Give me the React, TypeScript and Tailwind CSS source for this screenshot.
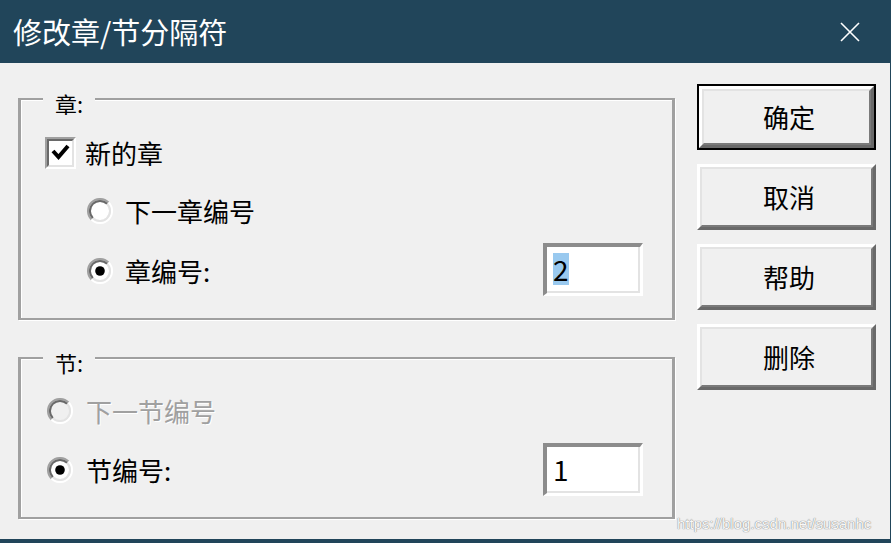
import React from "react";

const cjk = "font-['Noto_Sans_CJK_SC','Noto_Sans',sans-serif]";

function Radio({ checked, disabled }: { checked?: boolean; disabled?: boolean }) {
  return (
    <svg width="26" height="26" viewBox="0 0 26 26" className="shrink-0">
      <circle cx="13" cy="13" r="9" fill={disabled ? "#f0f0f0" : "#fff"} />
      <path d="M4.5 21.5 A12 12 0 0 1 21.5 4.5" stroke="#a0a0a0" strokeWidth="2" fill="none" />
      <path d="M21.5 4.5 A12 12 0 0 1 4.5 21.5" stroke="#fff" strokeWidth="2" fill="none" />
      <path d="M5.9 20.1 A10 10 0 0 1 20.1 5.9" stroke="#696969" strokeWidth="2" fill="none" />
      <path d="M20.1 5.9 A10 10 0 0 1 5.9 20.1" stroke="#e3e3e3" strokeWidth="2" fill="none" />
      {checked && <circle cx="13" cy="13" r="4.8" fill="#000" />}
    </svg>
  );
}

function Checkbox() {
  return (
    <div className="w-[31px] h-[32px] shrink-0 border-t-[2px] border-l-[2px] border-b-[2px] border-r-[2px] border-t-[#a0a0a0] border-l-[#a0a0a0] border-b-white border-r-white">
      <div className="w-full h-full border-2 border-t-[#696969] border-l-[#696969] border-b-[#e3e3e3] border-r-[#e3e3e3] bg-white flex items-center justify-center">
        <svg width="21" height="20" viewBox="0 0 21 20">
          <polyline points="3,8 8.5,14 18,3" stroke="#000" strokeWidth="4" fill="none" />
        </svg>
      </div>
    </div>
  );
}

function NumberBox({ value, selected }: { value: string; selected?: boolean }) {
  return (
    <div className="w-[100px] h-[53px] shrink-0 border-t-[4px] border-l-[4px] border-b-[3px] border-r-[3px] border-t-[#8c8c8c] border-l-[#8c8c8c] border-b-white border-r-white">
      <div className="w-full h-full bg-white border-b-2 border-r-2 border-[#e3e3e3] flex items-center pl-[6px]">
        <span
          className={`text-[28px] leading-[32px] text-black ${cjk} ${selected ? "bg-[#99c9ef]" : ""}`}
        >
          {value}
        </span>
      </div>
    </div>
  );
}

function Group({ label, className, children }: { label: string; className: string; children: React.ReactNode }) {
  return (
    <div
      className={`relative border-t-2 border-b-2 border-l-[3px] border-r-[3px] border-[#a0a0a0] shadow-[inset_1px_1px_0_#fff,1px_1px_0_#fff] ${className}`}
    >
      <span
        className={`absolute left-[22px] -top-[11px] px-[12px] bg-[#f0f0f0] text-[22px] leading-[28px] text-black ${cjk}`}
      >
        {label}
      </span>
      {children}
    </div>
  );
}

function DlgButton({ label, isDefault }: { label: string; isDefault?: boolean }) {
  const body = (
    <div className="h-full border-[3px] border-t-white border-l-white border-b-[#696969] border-r-[#696969]">
      <div className="h-full border-[2px] border-t-[#e3e3e3] border-l-[#e3e3e3] border-b-[#7a7a7a] border-r-[#7a7a7a] flex items-center justify-center pl-[5px]">
        <span className={`text-[26px] leading-none text-black ${cjk}`}>{label}</span>
      </div>
    </div>
  );
  return (
    <div className={`h-[66px] ${isDefault ? "border-2 border-black" : ""}`}>{body}</div>
  );
}

export default function App() {
  return (
    <div className={`w-[891px] h-[543px] bg-[#f0f0f0] flex flex-col overflow-hidden ${cjk}`}>
      {/* title bar */}
      <div className="h-[63px] shrink-0 bg-[#21455a] flex items-center justify-between pl-[13px] pr-[31px]">
        <span className="text-white text-[29px] leading-none">修改章/节分隔符</span>
        <svg width="20" height="20" viewBox="0 0 20 20">
          <path d="M1 1 L19 19 M19 1 L1 19" stroke="#fff" strokeWidth="1.6" />
        </svg>
      </div>

      <div className="relative flex flex-1 border-r border-[#21455a]">
        {/* left: groups */}
        <div className="ml-[18px] mt-[35px] w-[657px] flex flex-col gap-[37px]">
          <Group label="章:" className="h-[222px] pt-[24px] pr-[29px]">
            <div className="h-[58px] flex items-center pl-[24px] gap-[9px]">
              <Checkbox />
              <span className="text-[26px] leading-none text-black">新的章</span>
            </div>
            <div className="h-[58px] flex items-center pl-[66px] gap-[12px]">
              <Radio />
              <span className="text-[26px] leading-none text-black">下一章编号</span>
            </div>
            <div className="h-[58px] flex items-center justify-between pl-[66px]">
              <div className="flex items-center gap-[12px] pt-[4px]">
                <Radio checked />
                <span className="text-[26px] leading-none text-black">章编号:</span>
              </div>
              <NumberBox value="2" selected />
            </div>
          </Group>

          <Group label="节:" className="h-[162px] pt-[23px] pr-[29px]">
            <div className="h-[58px] flex items-center pl-[26px] gap-[13px]">
              <Radio disabled />
              <span className="text-[26px] leading-none text-[#a0a0a0] [text-shadow:1px_1px_0_#fff]">
                下一节编号
              </span>
            </div>
            <div className="h-[58px] flex items-center justify-between pl-[26px]">
              <div className="flex items-center gap-[13px] pt-[2px]">
                <Radio checked />
                <span className="text-[26px] leading-none text-black">节编号:</span>
              </div>
              <NumberBox value="1" />
            </div>
          </Group>
        </div>

        {/* right: buttons */}
        <div className="ml-[22px] mt-[21px] w-[179px] flex flex-col gap-[14px]">
          <DlgButton label="确定" isDefault />
          <DlgButton label="取消" />
          <DlgButton label="帮助" />
          <DlgButton label="删除" />
        </div>

        <span className="absolute left-[677px] top-[452px] font-['Liberation_Sans',sans-serif] text-[15px] leading-[18px] text-[#f8f8f8] [text-shadow:0_0_1px_#7a7a7a,0_0_1px_#9a9a9a]">
          https://blog.csdn.net/susanhc
        </span>
      </div>

      <div className="h-[4px] shrink-0 bg-[#21455a]" />
    </div>
  );
}
